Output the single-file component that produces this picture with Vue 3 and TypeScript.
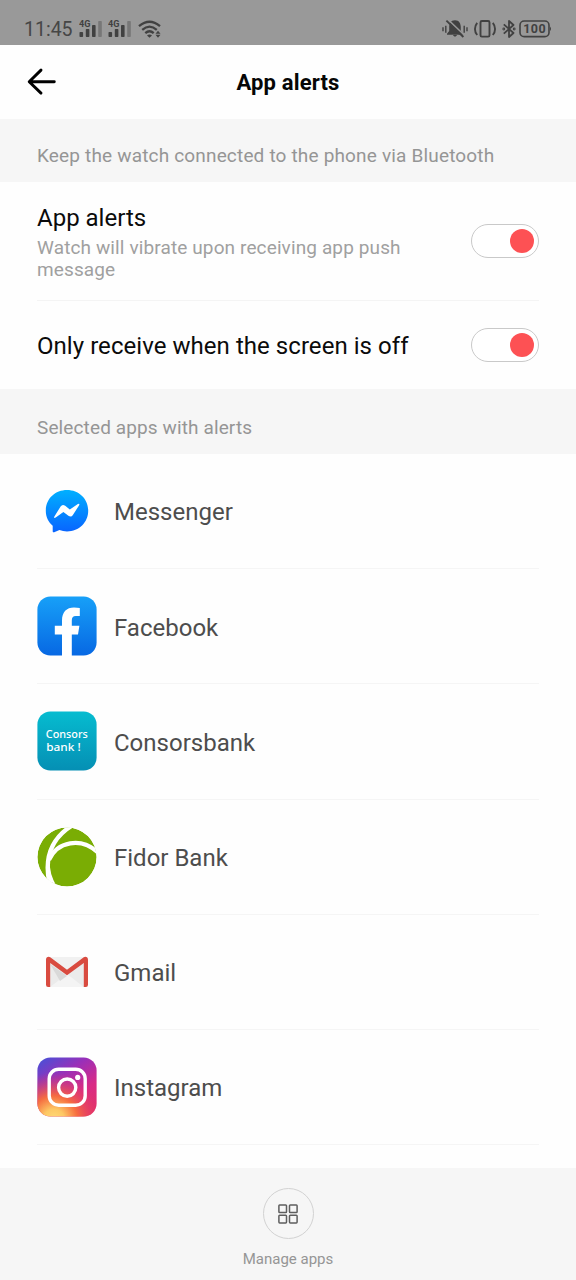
<script setup lang="ts">
import { ref } from 'vue'

interface AlertApp {
  id: string
  name: string
}

const apps: AlertApp[] = [
  { id: 'messenger', name: 'Messenger' },
  { id: 'facebook', name: 'Facebook' },
  { id: 'consors', name: 'Consorsbank' },
  { id: 'fidor', name: 'Fidor Bank' },
  { id: 'gmail', name: 'Gmail' },
  { id: 'instagram', name: 'Instagram' },
]

const alertsOn = ref(true)
const screenOffOnly = ref(true)
</script>

<template>
  <div class="screen">
    <div class="status">
      <span class="clock">11:45</span>
      <svg v-for="n in 2" :key="n" class="signal" viewBox="0 0 24 18" width="24" height="18">
        <text x="0" y="7.4" class="net" textLength="11.4" lengthAdjust="spacingAndGlyphs">4G</text>
        <rect x="0.5" y="12" width="3.6" height="5" rx="0.8" />
        <rect x="6.8" y="9" width="3.6" height="8" rx="0.8" />
        <rect x="13" y="5" width="3.6" height="12" rx="0.8" />
        <rect x="19.2" y="1" width="3.6" height="16" rx="0.8" class="dim" />
      </svg>
      <svg class="wifi" viewBox="0 0 24 18" width="24" height="18">
        <g fill="none" stroke="#414141" stroke-width="2.3">
          <path d="M1 6.2Q11.5-2.8 22 6.2" />
          <path d="M4.2 9.8Q11.5 3.4 18.8 9.8" />
          <path d="M7.3 13.2Q11.5 9.4 15.7 13.2" />
        </g>
        <path d="M9 15.4Q11.5 13.4 14 15.4L11.5 17.8Z" />
        <path d="M17.5 13.8L20 10.8L22.5 13.8ZM17.5 14.8H22.5L20 17.8Z" />
      </svg>
      <div class="status-right">
        <svg viewBox="0 0 26 20" width="26" height="20">
          <path d="M13 1.2C8.6 1.2 7.2 4.8 7.2 8V12L5 14.8V15.8H21V14.8L18.8 12V8C18.8 4.8 17.4 1.2 13 1.2ZM10.5 15.6H15.5Q13 19.8 10.5 15.6Z" />
          <path d="M5.4 0L23.2 17" stroke="#999" stroke-width="1.6" />
          <path d="M4.4 1.6L21.4 18" stroke="#414141" stroke-width="1.9" />
          <path d="M1 8.3V12.3M3.8 6.8V13.8M22.2 6.8V13.8M25 8.3V12.3" stroke="#414141" stroke-width="1.4" />
        </svg>
        <svg class="vibrate" viewBox="0 0 24 20" width="24" height="20" fill="none" stroke="#414141" stroke-width="1.9">
          <rect x="7.5" y="2" width="9" height="15.6" rx="1.4" />
          <path d="M4.2 3.8C1.2 7.4 1.2 12.4 4.2 16M19.8 3.8C22.8 7.4 22.8 12.4 19.8 16" />
        </svg>
        <svg class="bt" viewBox="0 0 14 20" width="14" height="20" fill="none" stroke="#414141" stroke-width="1.8">
          <path d="M1.8 5.4L11.5 14L7 18V2L11.5 6L1.8 14.6" stroke-linejoin="round" />
          <circle cx="1.8" cy="10" r=".5" />
          <circle cx="12.2" cy="10" r=".5" />
        </svg>
        <svg class="battery" viewBox="0 0 34 20" width="34" height="20">
          <rect x="1" y="2" width="29" height="15.6" rx="4.2" fill="none" stroke="#414141" stroke-width="1.6" />
          <path d="M31 7.5Q33 9.8 31 12Z" />
          <text x="15.7" y="14.3" text-anchor="middle" class="pct">100</text>
        </svg>
      </div>
    </div>

    <header class="topbar">
      <svg class="back" viewBox="0 0 30 28" width="30" height="28" fill="none" stroke="#000" stroke-width="2.9" stroke-linecap="round" stroke-linejoin="round">
        <path d="M15 2.1L3.2 13.8L15 25.1M3.5 13.8H28.3" />
      </svg>
      <h1>App alerts</h1>
    </header>

    <div class="note note-top">Keep the watch connected to the phone via Bluetooth</div>

    <section class="settings">
      <div class="setting first">
        <div class="copy">
          <div class="title">App alerts</div>
          <div class="desc">Watch will vibrate upon receiving app push message</div>
        </div>
        <button class="toggle" :class="{ on: alertsOn }" @click="alertsOn = !alertsOn"><i /></button>
      </div>
      <div class="setting second">
        <div class="title long">Only receive when the screen is off</div>
        <button class="toggle" :class="{ on: screenOffOnly }" @click="screenOffOnly = !screenOffOnly"><i /></button>
      </div>
    </section>

    <div class="note note-apps">Selected apps with alerts</div>

    <ul class="apps">
      <li v-for="app in apps" :key="app.id">
        <svg class="icon" viewBox="0 0 60 60" width="60" height="60">
          <template v-if="app.id === 'messenger'">
            <defs>
              <linearGradient id="msg" x1="0" y1="0" x2="0" y2="1">
                <stop offset="0" stop-color="#00b0ff" />
                <stop offset="1" stop-color="#0864ff" />
              </linearGradient>
            </defs>
            <path d="M30 9C18 9 8.8 17.8 8.8 29.8C8.8 36 11.4 41 15.7 44.8V50.4Q15.9 51.7 17.2 51.2L22.4 49.1Q26 50.4 30 50.4C42 50.4 51.2 41.4 51.2 29.8C51.2 17.8 42 9 30 9Z" fill="url(#msg)" />
            <path d="M17.4 35.5L23.6 25.5Q25.4 22.8 28.2 24.8L32.8 28.4L40.9 23.1Q43.2 22.1 42 24.4L35.9 34Q34.2 36.6 31.4 34.8L26.4 31.1L18.7 36.6Q16.4 37.6 17.4 35.5Z" fill="#fff" />
          </template>
          <template v-else-if="app.id === 'facebook'">
            <defs>
              <linearGradient id="fb" x1="0" y1="0" x2="0" y2="1">
                <stop offset="0" stop-color="#17a0f8" />
                <stop offset="1" stop-color="#0768e3" />
              </linearGradient>
            </defs>
            <rect x=".4" y=".4" width="59.2" height="59.2" rx="13" fill="url(#fb)" />
            <path d="M25 60V38.5H17.8V29.8H25V24.5C25 16.2 29.5 11.6 37 11.6Q40.2 11.6 42.8 12.1V20H38.8C35.8 20 34.8 21.6 34.8 24.4V29.8H42.4L41 38.5H34.8V60Z" fill="#fff" />
          </template>
          <template v-else-if="app.id === 'consors'">
            <defs>
              <linearGradient id="cb" x1="0" y1="0" x2="0" y2="1">
                <stop offset="0" stop-color="#06bcd0" />
                <stop offset="1" stop-color="#058fb4" />
              </linearGradient>
            </defs>
            <rect x=".4" y=".4" width="59.2" height="59.2" rx="13" fill="url(#cb)" />
            <text x="8.8" y="27.4" class="cb-text" textLength="42" lengthAdjust="spacingAndGlyphs">Consors</text>
            <text x="9.2" y="40.2" class="cb-text" textLength="34.5" lengthAdjust="spacingAndGlyphs">bank !</text>
          </template>
          <template v-else-if="app.id === 'fidor'">
            <defs>
              <clipPath id="fd"><circle cx="30" cy="30" r="29.6" /></clipPath>
            </defs>
            <g clip-path="url(#fd)">
              <circle cx="30" cy="30" r="29.6" fill="#7aad04" />
              <path d="M37.5-3C20 7 5.5 25 12.5 56" fill="none" stroke="#fff" stroke-width="4.4" />
              <path d="M12 33C20 14.5 44 9.5 61 25.5" fill="none" stroke="#fff" stroke-width="4.2" />
              <path d="M12.5 32Q12 47 20 60H12L10.8 38Z" fill="#fff" />
              <path d="M49 4Q56 12 61 24V0Z" fill="#fff" />
              <path d="M60.5 35Q57 50 45 59L61 60Z" fill="#fff" />
            </g>
          </template>
          <template v-else-if="app.id === 'gmail'">
            <rect x="9" y="15" width="42" height="30" rx="2.2" fill="#ebebeb" />
            <path d="M13 45L30 32L47 45Z" fill="#f4f4f4" />
            <path d="M13 22L30 34L23 39Z" fill="#d9d9d9" />
            <path d="M12 15L30 27.7L48 15Z" fill="#f1f1f1" />
            <path d="M9 18C9 14.6 11.7 14 13.6 15.4L30 27.8L46.4 15.4C48.3 14 51 14.6 51 18V42.8Q51 45 48.8 45H46.8V21L30 33.2L13.2 21V45H11.2Q9 45 9 42.8Z" fill="#d94b40" />
          </template>
          <template v-else>
            <defs>
              <linearGradient id="ig1" x1=".1" y1="0" x2=".75" y2="1">
                <stop offset="0" stop-color="#4b4fd6" />
                <stop offset=".35" stop-color="#9a2fb8" />
                <stop offset=".7" stop-color="#d92b86" />
                <stop offset="1" stop-color="#e1306c" />
              </linearGradient>
              <radialGradient id="ig2" cx=".28" cy="1.05" r=".8">
                <stop offset="0" stop-color="#ffdb78" />
                <stop offset=".22" stop-color="#fdc864" />
                <stop offset=".5" stop-color="#f8703c" stop-opacity=".95" />
                <stop offset="1" stop-color="#e0306c" stop-opacity="0" />
              </radialGradient>
            </defs>
            <rect x=".4" y=".4" width="59.2" height="59.2" rx="13" fill="url(#ig1)" />
            <rect x=".4" y=".4" width="59.2" height="59.2" rx="13" fill="url(#ig2)" />
            <rect x="12.2" y="12.2" width="36" height="36" rx="9.5" fill="none" stroke="#fff" stroke-width="3.4" />
            <circle cx="30.2" cy="30.6" r="8.6" fill="none" stroke="#fff" stroke-width="3.4" />
            <circle cx="40.7" cy="20.4" r="2.6" fill="#fff" />
          </template>
        </svg>
        <span class="name">{{ app.name }}</span>
      </li>
    </ul>

    <footer class="manage">
      <div class="round">
        <svg viewBox="0 0 20 20" width="20" height="20" fill="none" stroke="#5e5e5e" stroke-width="1.5">
          <rect x=".9" y=".9" width="7.6" height="7.6" rx=".8" />
          <rect x="11.5" y=".9" width="7.6" height="7.6" rx=".8" />
          <rect x=".9" y="11.3" width="7.6" height="7.6" rx=".8" />
          <rect x="11.5" y="11.3" width="7.6" height="7.6" rx=".8" />
        </svg>
      </div>
      <span>Manage apps</span>
    </footer>
  </div>
</template>

<style>
body {
  margin: 0;
  background: #fefefe;
}
</style>

<style scoped>
.screen {
  width: 576px;
  height: 1280px;
  display: flex;
  flex-direction: column;
  overflow: hidden;
  background: #fefefe;
  font-family: Roboto, 'Liberation Sans', sans-serif;
  color: #0b0b0b;
}
.screen * {
  box-sizing: border-box;
}
svg {
  display: block;
  flex: none;
}
.status {
  height: 44.5px;
  flex: none;
  padding: 14px 23px 0 24px;
  display: flex;
  align-items: center;
  background: #999;
  fill: #414141;
}
.clock {
  width: 55px;
  padding-top: 1px;
  font-size: 19.5px;
  color: #464646;
}
.signal {
  margin-right: 5.4px;
}
.net {
  font-size: 9px;
  font-weight: 700;
}
.dim {
  fill: #777;
}
.status-right {
  margin-left: auto;
  display: flex;
}
.vibrate {
  margin-left: 5px;
}
.bt {
  margin-left: 5px;
}
.battery {
  margin-left: 3px;
}
.pct {
  font-size: 12.5px;
  font-weight: 700;
  letter-spacing: 0.5px;
}
.topbar {
  height: 74px;
  flex: none;
  display: grid;
  grid-template-columns: 60px 1fr 60px;
  align-items: center;
}
.back {
  margin-left: 26px;
}
h1 {
  margin: 3px 0 0;
  text-align: center;
  font-size: 22px;
  font-weight: 700;
  line-height: 28px;
  letter-spacing: 0.15px;
  color: #060606;
}
.note {
  flex: none;
  padding: 0 37px;
  background: #f6f6f6;
  color: #959595;
  font-size: 19px;
  letter-spacing: 0.17px;
}
.note-top {
  height: 63.5px;
  line-height: 73px;
}
.settings {
  flex: none;
  padding: 0 37px;
}
.setting {
  display: flex;
  justify-content: space-between;
  align-items: center;
}
.first {
  height: 119px;
  border-bottom: 1px solid #f4f4f4;
}
.second {
  height: 88px;
}
.copy {
  width: 400px;
  padding-top: 2px;
}
.title {
  font-size: 24px;
  line-height: 32px;
}
.long {
  padding-top: 2px;
  letter-spacing: 0.05px;
}
.desc {
  padding-top: 2.5px;
  font-size: 19px;
  letter-spacing: 0.12px;
  line-height: 22.5px;
  color: #a0a0a0;
}
.toggle {
  width: 68px;
  height: 34px;
  padding: 0 4px;
  border: 1px solid #c9c9c9;
  border-radius: 17px;
  background: #fff;
  display: flex;
  align-items: center;
}
.toggle i {
  width: 24px;
  height: 24px;
  border-radius: 50%;
  background: #bbb;
}
.toggle.on {
  justify-content: flex-end;
}
.toggle.on i {
  background: #fd5154;
}
.note-apps {
  height: 65px;
  line-height: 77px;
  letter-spacing: 0.12px;
}
.apps {
  flex: 1;
  margin: 0;
  padding: 0 37px;
  list-style: none;
}
.apps li {
  height: 115.2px;
  display: flex;
  align-items: center;
  gap: 17px;
  border-bottom: 1px solid #f5f5f5;
}
.name {
  padding-top: 2.6px;
  font-size: 24px;
  color: #4d4d4d;
}
.cb-text {
  font-family: 'Noto Sans', 'Open Sans', sans-serif;
  font-size: 11.4px;
  font-weight: 500;
  fill: #fff;
}
.manage {
  height: 112px;
  flex: none;
  padding-top: 20px;
  display: flex;
  flex-direction: column;
  align-items: center;
  background: #f6f6f6;
  font-size: 15px;
  line-height: 18px;
  color: #959595;
}
.round {
  width: 51px;
  height: 51px;
  margin-bottom: 11px;
  border: 1px solid #d2d2d2;
  border-radius: 50%;
  display: flex;
  align-items: center;
  justify-content: center;
}
</style>
